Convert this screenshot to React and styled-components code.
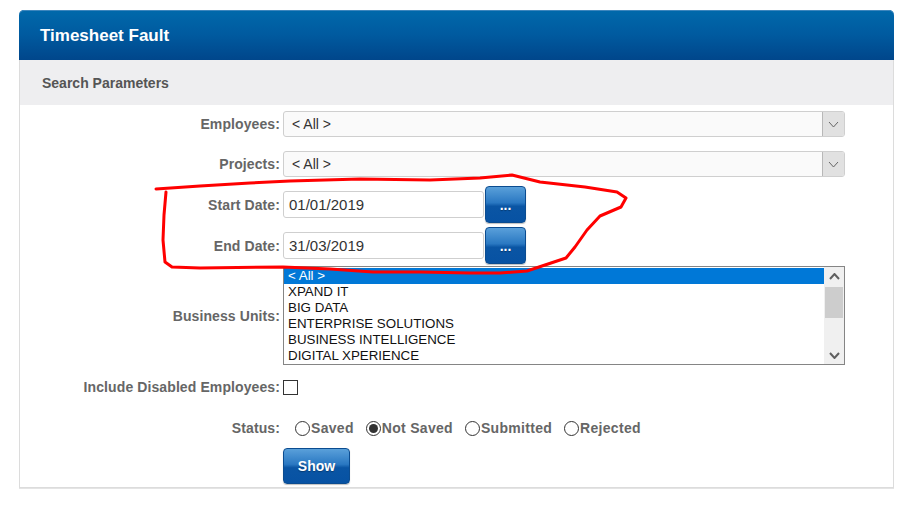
import React from "react";
import styled, { createGlobalStyle } from "styled-components";

const GlobalStyle = createGlobalStyle`
  html, body {
    margin: 0;
    padding: 0;
    background: #fff;
  }
  body {
    font-family: "Liberation Sans", Arial, sans-serif;
  }
`;

const Page = styled.div`
  position: relative;
  width: 902px;
  height: 507px;
  box-sizing: border-box;
  padding: 10px 8px 0 19px;
  overflow: hidden;
`;

const Panel = styled.div`
  width: 875px;
`;

const Header = styled.div`
  height: 50px;
  display: flex;
  align-items: center;
  padding-left: 21px;
  padding-top: 1px;
  box-sizing: border-box;
  border-radius: 5px 5px 0 0;
  background: linear-gradient(#0069ab, #005a9f 50%, #00468b);
  box-shadow: inset 0 1px 0 #3d86bd;
`;

const Title = styled.h1`
  margin: 0;
  font-size: 17px;
  font-weight: bold;
  color: #fff;
`;

const Body = styled.div`
  border: 1px solid #dcdcdc;
  border-top: none;
  padding-bottom: 3px;
  box-shadow: 0 1px 0 #e4e4e4;
`;

const SubHeader = styled.div`
  height: 45px;
  display: flex;
  align-items: center;
  padding-left: 22px;
  background: #eeeef0;
  font-size: 14px;
  font-weight: bold;
  color: #555;
`;

const Row = styled.div`
  display: flex;
  align-items: center;
  gap: 3px;
  margin-top: ${(p) => p.$top || 0}px;
  height: ${(p) => p.$h}px;
`;

const Label = styled.label`
  width: 260px;
  flex: none;
  text-align: right;
  font-size: 14px;
  font-weight: bold;
  letter-spacing: 0.1px;
  color: #666;
  white-space: nowrap;
`;

const SelectBox = styled.div`
  width: 562px;
  height: 26px;
  box-sizing: border-box;
  display: flex;
  align-items: center;
  border: 1px solid #cfcfcf;
  border-radius: 3px;
  background: #fafafa;
  font-size: 14px;
  color: #333;
`;

const SelectText = styled.span`
  flex: 1;
  padding-left: 8px;
`;

const DropButton = styled.span`
  width: 21px;
  height: 24px;
  display: flex;
  align-items: center;
  justify-content: center;
  border-left: 1px solid #b8b8b8;
  border-radius: 0 2px 2px 0;
  background: #e1e1e1;
`;

const DateGroup = styled.div`
  display: flex;
  align-items: center;
  gap: 1px;
`;

const DateInput = styled.div`
  width: 201px;
  height: 27px;
  box-sizing: border-box;
  display: flex;
  align-items: center;
  padding-left: 5px;
  border: 1px solid #cfcfcf;
  border-radius: 3px;
  background: #fff;
  font-size: 15px;
  color: #333;
`;

const BlueButton = styled.button`
  width: ${(p) => p.$w}px;
  height: ${(p) => p.$h}px;
  padding: 0;
  border: 1px solid #0b4c90;
  border-radius: 4px;
  background: linear-gradient(#5aa0da, #2a78c2 45%, #0a55a4 55%, #0752a3);
  box-shadow: 0 1px 1px rgba(0, 0, 0, 0.25);
  color: #fff;
  font-family: "Liberation Sans", Arial, sans-serif;
  font-size: 14px;
  font-weight: bold;
  text-shadow: 0 1px 1px rgba(0, 0, 0, 0.3);
  cursor: pointer;
`;

const ListBox = styled.div`
  width: 562px;
  height: 99px;
  box-sizing: border-box;
  display: flex;
  border: 1px solid #858585;
  background: #fff;
`;

const Options = styled.div`
  flex: 1;
  padding-top: 1px;
  overflow: hidden;
`;

const Option = styled.div`
  height: 16px;
  line-height: 16px;
  padding-left: 4px;
  font-family: Arial, "Liberation Sans", sans-serif;
  font-size: 13.33px;
  color: ${(p) => (p.$active ? "#fff" : "#111")};
  background: ${(p) => (p.$active ? "#0078d7" : "transparent")};
`;

const ScrollBar = styled.div`
  width: 20px;
  display: flex;
  flex-direction: column;
  background: #f0f0f0;
`;

const ScrollArrow = styled.div`
  height: 18px;
  display: flex;
  align-items: center;
  justify-content: center;
`;

const Thumb = styled.div`
  height: 31px;
  margin: 2px 1px 0 1px;
  background: #cdcdcd;
`;

const ScrollTrack = styled.div`
  flex: 1;
`;

const CheckBox = styled.span`
  width: 15px;
  height: 15px;
  box-sizing: border-box;
  border: 1px solid #333;
  background: #fff;
`;

const RadioGroup = styled.div`
  display: flex;
  align-items: center;
  gap: 12px;
  margin-left: 12px;
`;

const RadioItem = styled.label`
  display: flex;
  align-items: center;
  font-size: 14px;
  font-weight: bold;
  letter-spacing: 0.3px;
  color: #666;
`;

const RadioCircle = styled.span`
  width: 15px;
  height: 15px;
  box-sizing: border-box;
  margin-right: 1px;
  border: 1px solid #333;
  border-radius: 50%;
  background: #fff;
  display: flex;
  align-items: center;
  justify-content: center;

  &::after {
    content: "";
    display: ${(p) => (p.$checked ? "block" : "none")};
    width: 9px;
    height: 9px;
    border-radius: 50%;
    background: #333;
  }
`;

const Annotation = styled.svg`
  position: absolute;
  left: 0;
  top: 0;
  width: 902px;
  height: 507px;
  pointer-events: none;
`;

const Chevron = ({ up, color = "#666", w = 9, h = 5, sw = 1 }) => (
  <svg width={w + 2} height={h + 2} viewBox={`0 0 ${w + 2} ${h + 2}`}>
    <polyline
      points={
        up
          ? `1,${h + 1} ${w / 2 + 1},1 ${w + 1},${h + 1}`
          : `1,1 ${w / 2 + 1},${h + 1} ${w + 1},1`
      }
      fill="none"
      stroke={color}
      strokeWidth={sw}
    />
  </svg>
);

const units = [
  "< All >",
  "XPAND IT",
  "BIG DATA",
  "ENTERPRISE SOLUTIONS",
  "BUSINESS INTELLIGENCE",
  "DIGITAL XPERIENCE",
];

const statuses = [
  { label: "Saved", checked: false },
  { label: "Not Saved", checked: true },
  { label: "Submitted", checked: false },
  { label: "Rejected", checked: false },
];

function Select({ value }) {
  return (
    <SelectBox>
      <SelectText>{value}</SelectText>
      <DropButton>
        <Chevron />
      </DropButton>
    </SelectBox>
  );
}

function DateField({ label, value, top }) {
  return (
    <Row $top={top} $h={37}>
      <Label>{label}</Label>
      <DateGroup>
        <DateInput>{value}</DateInput>
        <BlueButton $w={41} $h={37}>...</BlueButton>
      </DateGroup>
    </Row>
  );
}

export default function App() {
  return (
    <Page>
      <GlobalStyle />
      <Panel>
        <Header>
          <Title>Timesheet Fault</Title>
        </Header>
        <Body>
          <SubHeader>Search Parameters</SubHeader>

          <Row $top={6} $h={26}>
            <Label>Employees:</Label>
            <Select value="< All >" />
          </Row>
          <Row $top={14} $h={26}>
            <Label>Projects:</Label>
            <Select value="< All >" />
          </Row>

          <DateField label="Start Date:" value="01/01/2019" top={9} />
          <DateField label="End Date:" value="31/03/2019" top={4} />

          <Row $top={2} $h={99}>
            <Label>Business Units:</Label>
            <ListBox>
              <Options>
                {units.map((u, i) => (
                  <Option key={u} $active={i === 0}>
                    {u}
                  </Option>
                ))}
              </Options>
              <ScrollBar>
                <ScrollArrow>
                  <Chevron up color="#606060" w={9} h={5} sw={2} />
                </ScrollArrow>
                <Thumb />
                <ScrollTrack />
                <ScrollArrow>
                  <Chevron color="#606060" w={9} h={5} sw={2} />
                </ScrollArrow>
              </ScrollBar>
            </ListBox>
          </Row>

          <Row $top={14} $h={16}>
            <Label>Include Disabled Employees:</Label>
            <CheckBox />
          </Row>

          <Row $top={23} $h={20}>
            <Label>Status:</Label>
            <RadioGroup>
              {statuses.map((s) => (
                <RadioItem key={s.label}>
                  <RadioCircle $checked={s.checked} />
                  {s.label}
                </RadioItem>
              ))}
            </RadioGroup>
          </Row>

          <Row $top={10} $h={36}>
            <Label />
            <BlueButton $w={67} $h={36}>Show</BlueButton>
          </Row>
        </Body>
      </Panel>

      <Annotation viewBox="0 0 902 507">
        <path
          d="M156,189 L200,186 L250,183 L290,181 L360,179 L430,180 L480,178 L512,175 L540,182 L585,187 L617,192 L626,198 L621,207 L600,216 L587,230 L575,247 L566,258 L545,265 L527,271 L500,273 L470,273 L420,272 L373,272 L330,269 L283,267 L200,268 L172,267 L165,262 L163,240 L164,215 L166,192"
          fill="none"
          stroke="#f00"
          strokeWidth="3"
          strokeLinejoin="round"
          strokeLinecap="round"
        />
      </Annotation>
    </Page>
  );
}
